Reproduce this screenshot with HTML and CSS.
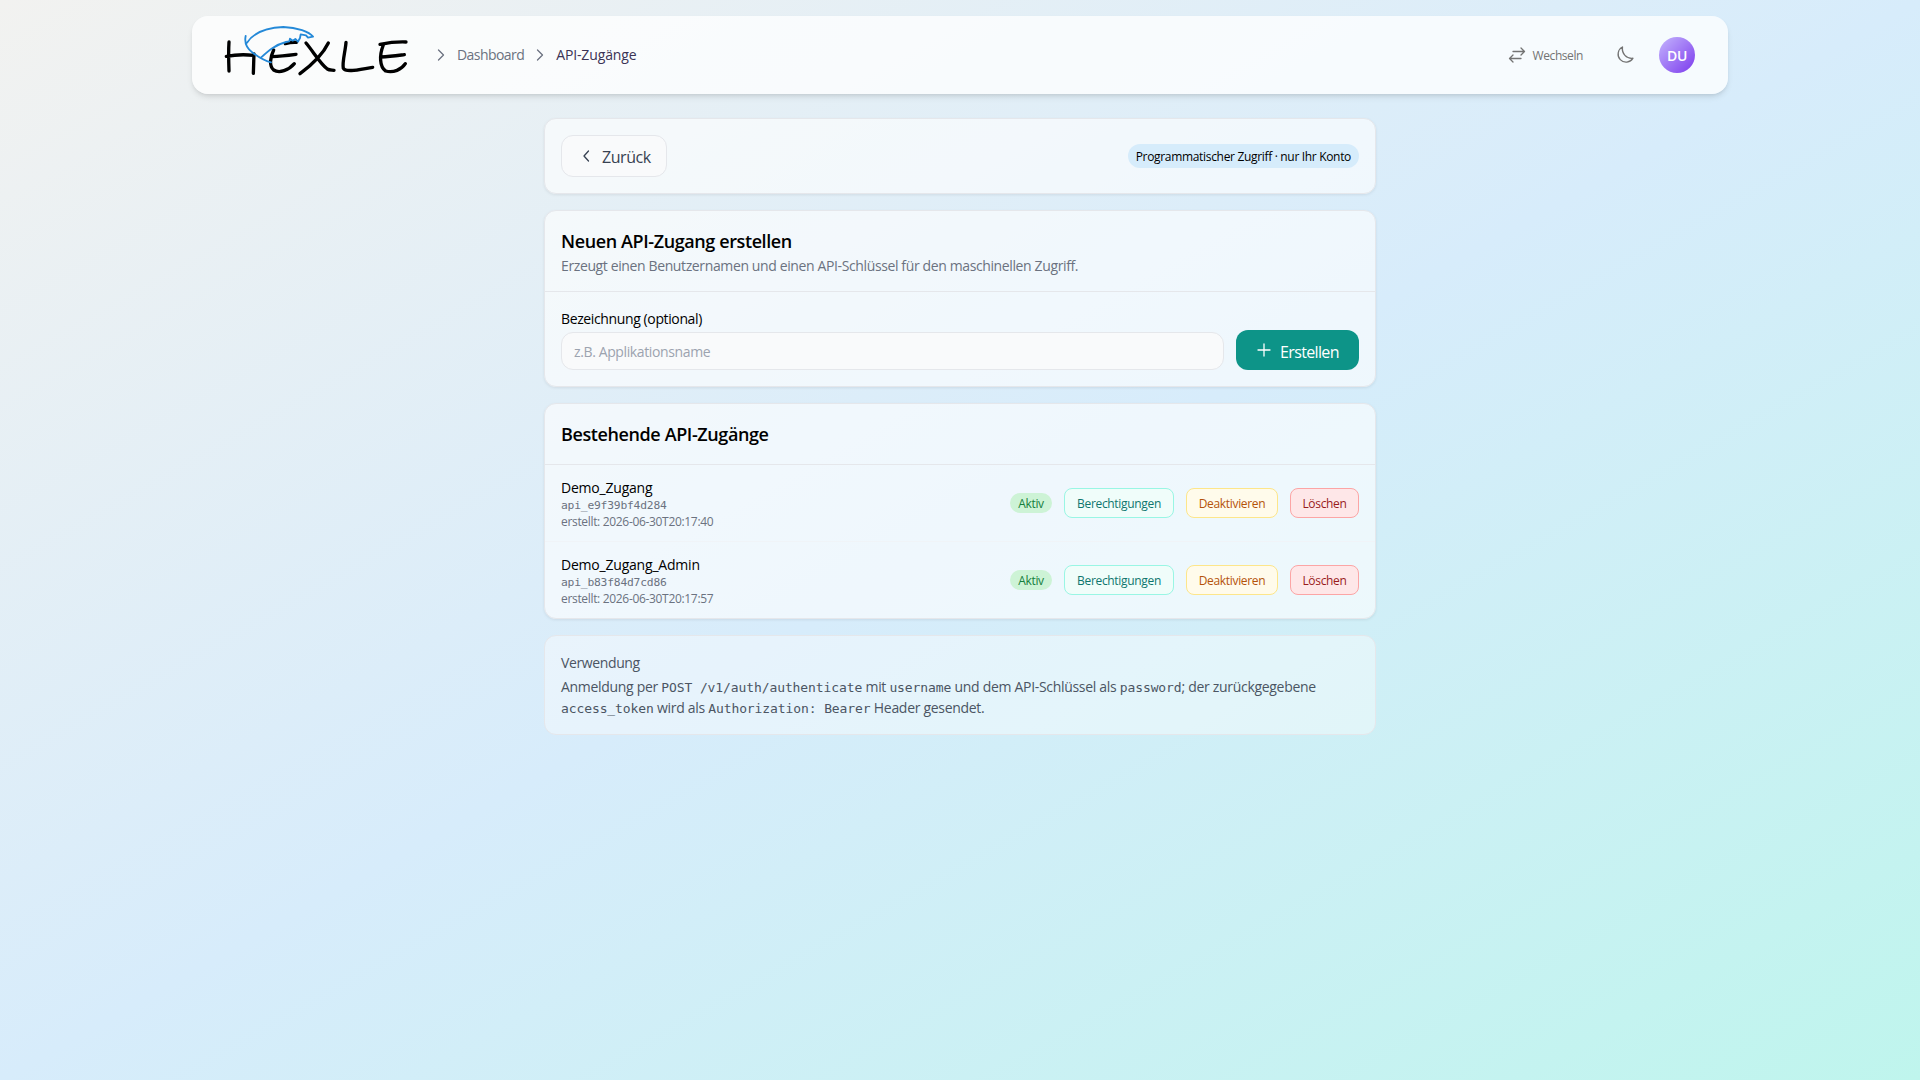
FILE: index.html
```html
<!DOCTYPE html>
<html lang="de">
<head>
  <meta charset="UTF-8">
  <meta name="viewport" content="width=device-width, initial-scale=1.0">
  <title>API-Zugänge</title>
  <link rel="stylesheet" href="styles.css">
</head>
<body>
  <header class="topbar">
    <svg class="logo" width="210" height="70" viewBox="0 0 630 210" role="img" aria-label="HEXLE">
      <g stroke="#000" stroke-width="10">
        <path d="M57 81C55 110 56 140 57 168M49 124C75 119 105 118 131 121M132 117C131 135 131 155 130 175"/>
        <path d="M259 82C248 81 236 83 226 86M191 105C180 128 177 153 191 165C208 176 236 166 253 146M187 125C210 124 235 121 258 118"/>
        <path d="M288 84C310 110 330 145 352 162C358 166 364 165 372 166M355 84C340 115 305 150 270 176"/>
        <path d="M408 82C406 110 396 140 400 160C408 175 455 162 488 157"/>
        <path d="M588 81C560 80 535 83 510 88M520 90C508 120 508 155 527 168C550 175 575 163 586 146M513 126C540 125 560 122 583 119"/>
      </g>
      <path stroke="#2489d8" stroke-width="5.500" d="M107 63C103 82 107 98 128 113C146 127 162 137 183 142M111 83C132 51 172 38 220 36C262 37 298 51 309 65L294 68L288 61L272 58L270 69L264 80L256 72L248 77L240 71L238 79L228 81C196 89 174 109 154 127"/>
    </svg>
    <nav class="breadcrumb">
      <svg width="16" height="16" viewBox="0 0 16 16"><path d="M5.500 3l5 5-5 5"/></svg>
      <a>Dashboard</a>
      <svg width="16" height="16" viewBox="0 0 16 16"><path d="M5.500 3l5 5-5 5"/></svg>
      <span class="current">API-Zugänge</span>
    </nav>
    <div class="actions">
      <button class="switch">
        <svg width="18" height="18" viewBox="0 0 18 18"><path d="M5 5.500h11.500M13 2l3.500 3.500L13 9M13 12.500H1.500M5 9l-3.500 3.500L5 16"/></svg>
        Wechseln
      </button>
      <svg class="moon" width="20" height="20" viewBox="0 0 20 20"><path d="M7.500 2A8 8 0 1 0 18 13.200C11.500 14 6.500 8.500 7.500 2z"/></svg>
      <div class="avatar">DU</div>
    </div>
  </header>

  <main>
    <section class="card toolbar">
      <button class="back">
        <svg width="16" height="16" viewBox="0 0 16 16"><path d="M10.500 3L6 8l4.500 5"/></svg>
        Zurück
      </button>
      <span class="note">Programmatischer Zugriff · nur Ihr Konto</span>
    </section>

    <section class="card">
      <div class="card-head">
        <h2>Neuen API-Zugang erstellen</h2>
        <p>Erzeugt einen Benutzernamen und einen API-Schlüssel für den maschinellen Zugriff.</p>
      </div>
      <form class="create">
        <div class="field">
          <label for="label">Bezeichnung (optional)</label>
          <input id="label" type="text" placeholder="z.B. Applikationsname">
        </div>
        <button type="button" class="primary">
          <svg width="16" height="16" viewBox="0 0 16 16"><path d="M8 2v12M2 8h12"/></svg>
          Erstellen
        </button>
      </form>
    </section>

    <section class="card">
      <div class="card-head single">
        <h2>Bestehende API-Zugänge</h2>
      </div>
      <div class="row">
        <div class="info">
          <div class="name">Demo_Zugang</div>
          <div class="key">api_e9f39bf4d284</div>
          <div class="date">erstellt: 2026-06-30T20:17:40</div>
        </div>
        <span class="badge">Aktiv</span>
        <button class="small perms">Berechtigungen</button>
        <button class="small disable">Deaktivieren</button>
        <button class="small delete">Löschen</button>
      </div>
      <div class="row">
        <div class="info">
          <div class="name">Demo_Zugang_Admin</div>
          <div class="key">api_b83f84d7cd86</div>
          <div class="date">erstellt: 2026-06-30T20:17:57</div>
        </div>
        <span class="badge">Aktiv</span>
        <button class="small perms">Berechtigungen</button>
        <button class="small disable">Deaktivieren</button>
        <button class="small delete">Löschen</button>
      </div>
    </section>

    <section class="card usage">
      <h3>Verwendung</h3>
      <p>Anmeldung per <code>POST /v1/auth/authenticate</code> mit <code>username</code> und dem API-Schlüssel als <code>password</code>; der zurückgegebene<br><code>access_token</code> wird als <code>Authorization: Bearer</code> Header gesendet.</p>
    </section>
  </main>
</body>
</html>
```
FILE: styles.css
```css
* {
  box-sizing: border-box;
  letter-spacing: -0.027em;
}
body {
  margin: 0;
  min-height: 100vh;
  padding-top: 16px;
  font-family: "Open Sans", "Noto Sans", sans-serif;
  font-size: 14px;
  line-height: 20px;
  color: #000;
  background: linear-gradient(to bottom right, #f2f2f0 0%, #d7ecfb 50%, #bff5ed 100%);
}
h2, h3, p {
  margin: 0;
}
button, input {
  font-family: inherit;
}
svg {
  fill: none;
  stroke: currentColor;
  stroke-width: 1.3;
  stroke-linecap: round;
  stroke-linejoin: round;
  flex-shrink: 0;
}
.topbar {
  width: 1536px;
  height: 78px;
  margin: 0 auto 24px;
  padding: 0 33px 0 32px;
  display: flex;
  align-items: center;
  border-radius: 16px;
  background: rgba(255, 255, 255, 0.76);
  box-shadow: 0 4px 6px -1px rgba(0, 0, 0, 0.1), 0 2px 4px -2px rgba(0, 0, 0, 0.1);
}
.logo {
  margin: 0 0 10px -14px;
}
.breadcrumb {
  display: flex;
  align-items: center;
  gap: 8px;
  margin-left: 13px;
  color: #6b7280;
}
.breadcrumb a {
  letter-spacing: -0.04em;
}
.breadcrumb .current {
  color: #3b3355;
  letter-spacing: -0.01em;
}
.actions {
  display: flex;
  align-items: center;
  margin-left: auto;
  color: #737373;
}
.switch {
  display: flex;
  align-items: center;
  gap: 7px;
  padding: 0;
  border: 0;
  background: none;
  font-size: 12px;
  letter-spacing: -0.035em;
  color: #737373;
}
.moon {
  margin: 0 24px 0 32px;
}
.avatar {
  width: 36px;
  height: 36px;
  border-radius: 50%;
  background: linear-gradient(135deg, #c4b5fd, #7c3aed);
  color: #fff;
  font-weight: 600;
  line-height: 37px;
  text-align: center;
}
main {
  width: 832px;
  margin: 0 auto;
  display: flex;
  flex-direction: column;
  gap: 16px;
}
.card {
  border: 1px solid #e5e7eb;
  border-radius: 12px;
  background: rgba(255, 255, 255, 0.6);
  box-shadow: 0 1px 3px rgba(0, 0, 0, 0.08);
}
.toolbar {
  height: 76px;
  padding: 0 16px;
  display: flex;
  align-items: center;
  justify-content: space-between;
}
.back {
  display: flex;
  align-items: center;
  gap: 8px;
  width: 106px;
  height: 42px;
  padding: 2px 15px 0 16px;
  border: 1px solid #e5e7eb;
  border-radius: 12px;
  background: #f9fafb;
  color: #374151;
  font-size: 16px;
}
.back svg, .primary svg {
  margin-bottom: 3px;
}
.note {
  height: 24px;
  padding: 0 8px;
  border-radius: 12px;
  background: #d6ecfb;
  font-size: 12px;
  line-height: 25px;
}
.card-head {
  height: 81px;
  padding: 16px;
  border-bottom: 1px solid #e5e7eb;
}
.card-head.single {
  height: 61px;
}
.card-head h2 {
  font-size: 18px;
  line-height: 29px;
  font-weight: 600;
  letter-spacing: -0.022em;
}
.card-head p {
  color: #6b7280;
}
.create {
  height: 94px;
  padding: 16px;
  display: flex;
  align-items: flex-end;
  gap: 12px;
}
.field {
  flex: 1;
}
.field label {
  display: block;
  margin-bottom: 3px;
}
.field input {
  display: block;
  width: 100%;
  height: 38px;
  padding: 1px 12px 0;
  border: 1px solid #e5e7eb;
  border-radius: 12px;
  background: #f9fafb;
  font-size: 14px;
}
.field input::placeholder {
  color: #9ca3af;
}
.primary {
  display: flex;
  align-items: center;
  gap: 8px;
  width: 123px;
  height: 40px;
  padding: 3px 20px 0;
  border: 0;
  border-radius: 12px;
  background: #0d9488;
  color: #fff;
  font-size: 16px;
  letter-spacing: -0.04em;
}
.row {
  height: 76px;
  padding: 0 16px;
  display: flex;
  align-items: center;
  gap: 12px;
}
.row + .row {
  height: 77px;
  border-top: 1px solid #f0f4f8;
}
.info {
  flex: 1;
  padding-top: 1px;
}
.name {
  padding-top: 1px;
  line-height: 19px;
  letter-spacing: -0.015em;
}
.key, .date {
  color: #6b7280;
  font-size: 12px;
  line-height: 17px;
}
.key, code {
  font-family: "DejaVu Sans Mono", monospace;
}
.key {
  font-size: 11.3px;
  line-height: 17px;
  letter-spacing: -0.2px;
}
.date {
  line-height: 16px;
}
.badge {
  width: 42px;
  height: 20px;
  border-radius: 10px;
  background: #cdf3d6;
  color: #15803d;
  font-size: 12px;
  line-height: 21px;
  text-align: center;
}
.small {
  height: 30px;
  padding: 1px 0 0;
  border: 1px solid;
  border-radius: 8px;
  font-size: 12px;
}
.perms {
  width: 110px;
  border-color: #99f6e4;
  background: #f0fdfa;
  color: #0f766e;
}
.disable {
  width: 92px;
  border-color: #fde68a;
  background: #fffbeb;
  color: #b45309;
}
.delete {
  width: 69px;
  border-color: #fca5a5;
  background: #fee7e8;
  color: #991b1b;
}
.usage {
  height: 100px;
  padding: 17px 16px;
  background: rgba(255, 255, 255, 0.4);
  box-shadow: none;
  color: #4b5563;
}
.usage h3 {
  margin-bottom: 3px;
  font-size: 14px;
  font-weight: 400;
}
.usage p {
  line-height: 21px;
  letter-spacing: -0.022em;
}
code {
  font-size: 13px;
  line-height: 1;
  letter-spacing: -0.1px;
}
```
